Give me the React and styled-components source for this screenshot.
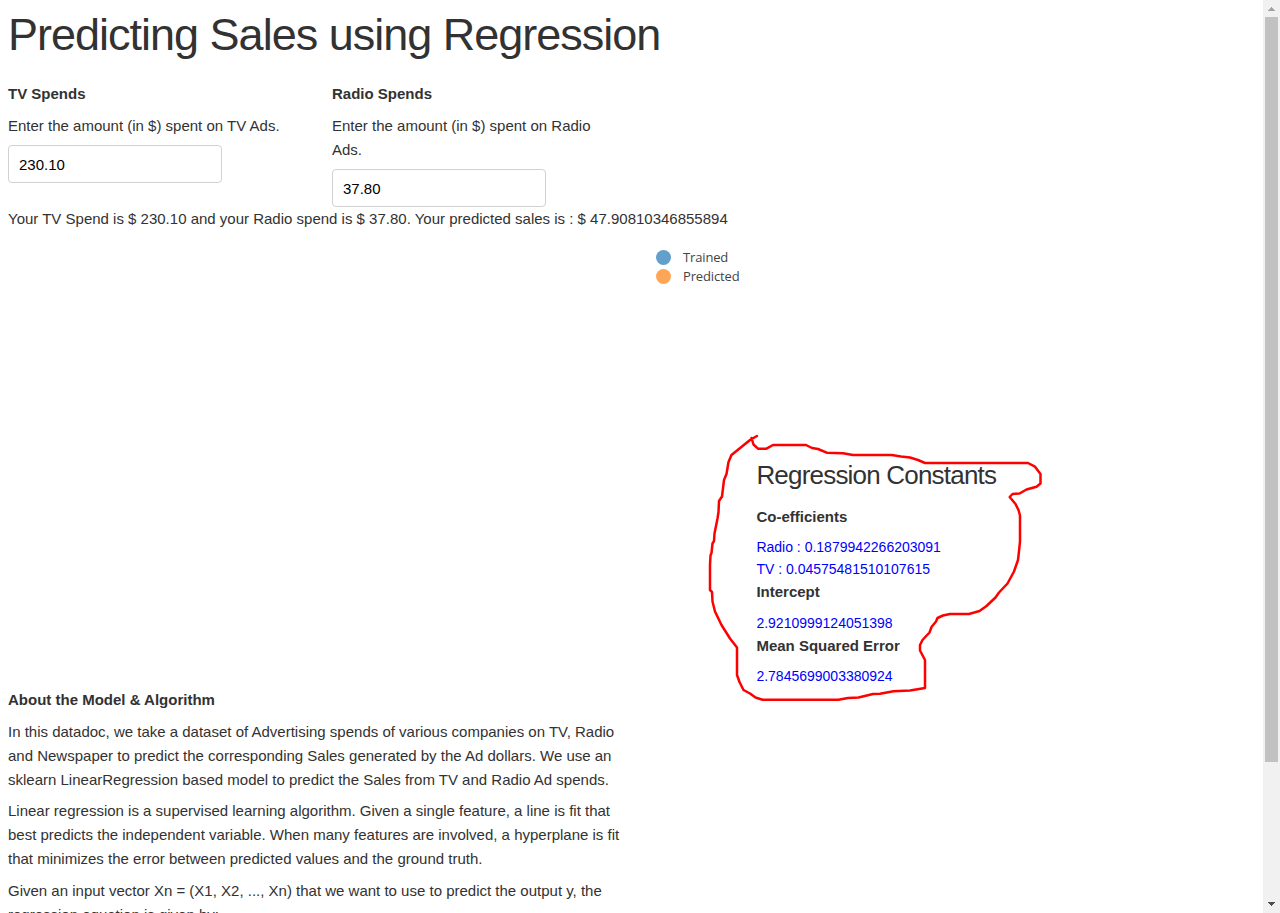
import React, { useState } from "react";
import styled, { createGlobalStyle } from "styled-components";

const GlobalStyle = createGlobalStyle`
  html { font-size: 10px; overflow: hidden; }
  body {
    margin: 0;
    overflow: hidden;
    background: #fff;
    color: #323232;
    font: 400 15px/24px "Liberation Sans", Arial, sans-serif;
  }
  * { box-sizing: border-box; }
`;

const Viewport = styled.div`
  display: flex;
  position: relative;
  width: 100%;
  height: 100vh;
  overflow: hidden;
`;

const Page = styled.main`
  flex: 1;
  min-width: 0;
  padding: 8px 8px 0;
  overflow: hidden;
`;

const Title = styled.h1`
  margin: 0 0 20px;
  font-size: 45px;
  font-weight: 400;
  line-height: 54px;
  letter-spacing: -1px;
`;

const Fields = styled.section`
  display: grid;
  grid-template-columns: 274px 274px;
  column-gap: 50px;
  align-items: start;
`;

const Label = styled.strong`
  display: block;
  margin-bottom: 8px;
  font-weight: 700;
  line-height: 24px;
`;

const Paragraph = styled.p`
  margin: 0 0 ${(p) => p.$gap || "7px"};
`;

const NumberInput = styled.input`
  display: block;
  width: 214px;
  height: 38px;
  padding: 6px 10px;
  border: 1px solid #d1d1d1;
  border-radius: 4px;
  background: #fff;
  color: #000;
  font: inherit;
  outline: none;
`;

const Chart = styled.section`
  display: flex;
  height: 457px;
  padding-left: 648px;
`;

const ChartAside = styled.div`
  display: flex;
  flex-direction: column;
  padding-top: 17px;
`;

const Legend = styled.ul`
  margin: 0;
  padding: 0;
  list-style: none;
`;

const LegendItem = styled.li`
  display: flex;
  align-items: center;
  gap: 12px;
  height: 19px;
  color: #444;
  font: 13px/19px "Open Sans", sans-serif;
  letter-spacing: -0.15px;
`;

const Dot = styled.span`
  width: 15px;
  height: 15px;
  border-radius: 50%;
  background: ${(p) => p.$color};
`;

const Constants = styled.div`
  margin: 172px 0 0 100.4px;
`;

const ConstantsTitle = styled.h2`
  margin: 0 0 12px;
  font-size: 26px;
  font-weight: 400;
  line-height: 35px;
  letter-spacing: -0.8px;
  white-space: nowrap;
`;

const Group = styled.div`
  height: ${(p) => p.$height};
`;

const ConstantLabel = styled(Label)`
  margin-bottom: ${(p) => p.$gap || "7px"};
`;

const Value = styled.div`
  color: blue;
  font-size: 14px;
  line-height: 22px;
`;

const About = styled.section`
  width: 620px;
`;

const Scrollbar = styled.div`
  display: flex;
  flex-direction: column;
  align-items: center;
  width: 17px;
  height: 100%;
  background: #f1f1f1;
`;

const Arrow = styled.svg`
  display: block;
  flex: none;
  width: 17px;
  height: 17px;
  fill: ${(p) => p.$color};
`;

const Thumb = styled.div`
  width: 13px;
  height: 745px;
  margin-bottom: auto;
  background: #c1c1c1;
`;

const Annotation = styled.svg`
  position: absolute;
  left: 700px;
  top: 425px;
  width: 350px;
  height: 285px;
  fill: none;
  stroke: #f00;
  stroke-width: 2.5;
  stroke-linejoin: round;
  stroke-linecap: round;
  pointer-events: none;
`;

function SpendField({ name, prompt, value, onChange }) {
  return (
    <div>
      <Label>{name}</Label>
      <Paragraph>{prompt}</Paragraph>
      <NumberInput value={value} onChange={(e) => onChange(e.target.value)} aria-label={name} />
    </div>
  );
}

export default function App() {
  const [tv, setTv] = useState("230.10");
  const [radio, setRadio] = useState("37.80");

  return (
    <>
      <GlobalStyle />
      <Viewport>
        <Page>
          <Title>Predicting Sales using Regression</Title>
          <Fields>
            <SpendField name="TV Spends" prompt="Enter the amount (in $) spent on TV Ads." value={tv} onChange={setTv} />
            <SpendField name="Radio Spends" prompt="Enter the amount (in $) spent on Radio Ads." value={radio} onChange={setRadio} />
          </Fields>
          <div>
            Your TV Spend is $ {tv} and your Radio spend is $ {radio}. Your predicted sales is : $ 47.90810346855894
          </div>
          <Chart>
            <ChartAside>
              <Legend>
                <LegendItem><Dot $color="#629fca" />Trained</LegendItem>
                <LegendItem><Dot $color="#ffa556" />Predicted</LegendItem>
              </Legend>
              <Constants>
                <ConstantsTitle>Regression Constants</ConstantsTitle>
                <Group $height="75px">
                  <ConstantLabel>Co-efficients</ConstantLabel>
                  <Value>Radio : 0.1879942266203091</Value>
                  <Value>TV : 0.04575481510107615</Value>
                </Group>
                <Group $height="54px">
                  <ConstantLabel $gap="8px">Intercept</ConstantLabel>
                  <Value>2.9210999124051398</Value>
                </Group>
                <Group $height="54px">
                  <ConstantLabel>Mean Squared Error</ConstantLabel>
                  <Value>2.7845699003380924</Value>
                </Group>
              </Constants>
            </ChartAside>
          </Chart>
          <About>
            <Label>About the Model &amp; Algorithm</Label>
            <Paragraph>
              In this datadoc, we take a dataset of Advertising spends of various companies on TV, Radio and Newspaper to
              predict the corresponding Sales generated by the Ad dollars. We use an sklearn LinearRegression based model
              to predict the Sales from TV and Radio Ad spends.
            </Paragraph>
            <Paragraph $gap="8px">
              Linear regression is a supervised learning algorithm. Given a single feature, a line is fit that best
              predicts the independent variable. When many features are involved, a hyperplane is fit that minimizes the
              error between predicted values and the ground truth.
            </Paragraph>
            <Paragraph>
              Given an input vector Xn = (X1, X2, ..., Xn) that we want to use to predict the output y, the regression
              equation is given by:
            </Paragraph>
          </About>
        </Page>
        <Scrollbar>
          <Arrow $color="#a3a3a3" viewBox="0 0 17 17" shapeRendering="crispEdges">
            <path d="M8 7h1v1h1v1h1v1h1v1H5v-1h1V9h1V8h1z" />
          </Arrow>
          <Thumb />
          <Arrow $color="#505050" viewBox="0 0 17 17" shapeRendering="crispEdges">
            <path d="M5 6h7v1h-1v1h-1v1H9v1H8V9H7V8H6V7H5z" />
          </Arrow>
        </Scrollbar>
        <Annotation viewBox="700 425 350 285">
          <path d="M757 436L750 440L731.5 455L728.5 462L726.5 474L724 480L722 496.5L719 501L718.5 512L717.5 518.5L714.5 533.5L714 541L712.5 543.5L711.5 553L710.5 555.5L710 565V590L712 592L712.5 601.5L715 611.5L721.5 625L730 638.5L737 647.5V675L739.5 682L743.5 690L750 693.5L755.5 697.5L762.5 699.7H838.5L848 698L858.5 697.5L873 694L880 693.7L893.5 691.2L910 690.5L925 688V660L920 650.5V645L922.5 640L929.5 632.5L931.5 627L936 621.5L937.5 618L943 615.5L950 614H969L979.5 611L986.5 606L995.5 597.5L999 592.5L1007.5 583.5L1014 571.5L1018 560L1018.7 554L1020 541.5V515.5L1018.5 510L1015.5 504L1009.7 497L1012.5 494L1019.5 493.5L1026.5 489.5L1036.5 486.7L1040.5 483.5V474L1035 466.7L1028 463H925L918 460L910 457.5L901 456.5L891.7 455H853L843 453.2L826.7 452.7L818 449L812 448L806 445H773L766.5 448.7H758L753.5 444.5L751.5 438" />
        </Annotation>
      </Viewport>
    </>
  );
}
